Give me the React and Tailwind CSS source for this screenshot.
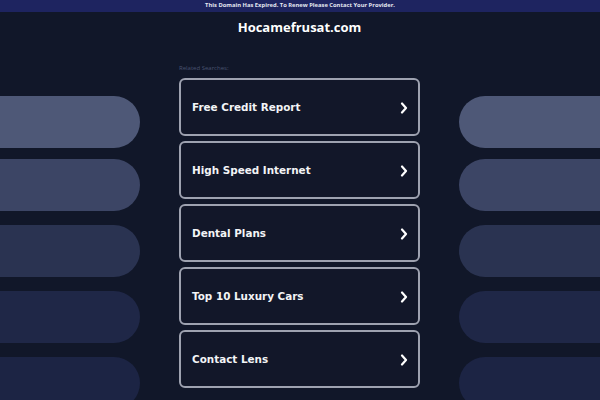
const links = ['Free Credit Report', 'High Speed Internet', 'Dental Plans', 'Top 10 Luxury Cars', 'Contact Lens'];

// decorative pills on both sides, fading from light to dark
const pills = [
  { color: 'bg-[#4e5877]', gap: 'mt-0' },
  { color: 'bg-[#3c4565]', gap: 'mt-[11px]' },
  { color: 'bg-[#2a3351]', gap: 'mt-[14px]' },
  { color: 'bg-[#1f2747]', gap: 'mt-[14px]' },
  { color: 'bg-[#1c2444]', gap: 'mt-[14px]' },
];

const Chevron = () => (
  <svg width="8" height="12" viewBox="0 0 8 12" fill="none">
    <polyline points="2,1.5 6,6 2,10.5" stroke="#ffffff" strokeWidth="2.2" strokeLinecap="round" strokeLinejoin="round" />
  </svg>
);

const PillColumn = ({ side }) => (
  <div className={`flex flex-col pt-[84px] ${side === 'left' ? 'w-[140px]' : 'w-[141px]'}`}>
    {pills.map((p, i) => (
      <div
        key={i}
        className={`h-[52px] shrink-0 ${p.color} ${p.gap} ${side === 'left' ? 'rounded-r-full' : 'rounded-l-full'}`}
      />
    ))}
  </div>
);

export default function App() {
  return (
    <div className="w-[600px] h-[400px] overflow-hidden bg-[#111729] font-['Open_Sans',sans-serif]">
      {/* expired banner */}
      <div className="h-[12px] bg-[#1e2460] flex items-center justify-center">
        <span className="text-[5.8px] font-bold text-[#e4e7f0] leading-none">
          This Domain Has Expired. To Renew Please Contact Your Provider.
        </span>
      </div>

      <div className="flex justify-between">
        <PillColumn side="left" />

        <div className="w-[241px] flex flex-col">
          <div className="h-[30px] flex items-center justify-center">
            <h1 className="text-[13px] font-bold text-white leading-none">Hocamefrusat.com</h1>
          </div>
          <div className="h-[36px] flex items-end pb-[7px]">
            <span className="text-[6px] text-[#4a5370] leading-none">Related Searches:</span>
          </div>
          <div className="flex flex-col gap-[5px]">
            {links.map((l) => (
              <div
                key={l}
                className="h-[58px] shrink-0 border-2 border-[#9ea2b0] rounded-[6px] pl-[11px] pr-[10px] pt-[1px] flex items-center justify-between bg-[#121729]"
              >
                <span className="text-[10.4px] font-bold text-[#f3f4f6] font-['DejaVu_Sans',sans-serif]">{l}</span>
                <Chevron />
              </div>
            ))}
          </div>
        </div>

        <PillColumn side="right" />
      </div>
    </div>
  );
}
